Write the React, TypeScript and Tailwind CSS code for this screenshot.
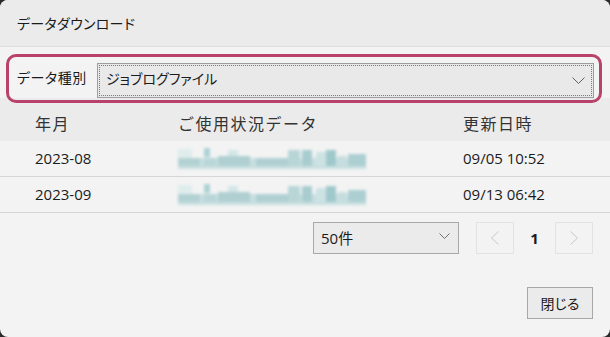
import React from "react";

const Blur = () => (
  <svg width="192" height="26" viewBox="0 0 192 26" className="block">
    <defs>
      <filter id="bl" x="-10%" y="-30%" width="120%" height="160%">
        <feGaussianBlur stdDeviation="1.4" />
      </filter>
    </defs>
    <g filter="url(#bl)">
      <rect x="2" y="12" width="188" height="11" fill="#c8dfe0" />
      <rect x="2" y="3" width="14" height="9" fill="#dfecec" />
      <rect x="2" y="12" width="22" height="8" fill="#b2d1d3" />
      <rect x="28" y="2" width="6" height="9" fill="#acd1d4" />
      <rect x="28" y="12" width="12" height="8" fill="#b8d6d8" />
      <rect x="42" y="10" width="32" height="10" fill="#afcfd1" />
      <rect x="52" y="4" width="10" height="6" fill="#d4e6e7" />
      <rect x="80" y="12" width="32" height="8" fill="#b0cfd2" />
      <rect x="112" y="4" width="12" height="16" fill="#b8d5d7" />
      <rect x="126" y="4" width="10" height="16" fill="#a8cccf" />
      <rect x="140" y="6" width="10" height="14" fill="#cce2e3" />
      <rect x="150" y="4" width="10" height="16" fill="#9fc8cb" />
      <rect x="162" y="10" width="8" height="10" fill="#c6dddf" />
      <rect x="172" y="8" width="18" height="12" fill="#accfd2" />
    </g>
  </svg>
);

const Chevron = ({ w, h, color }: { w: number; h: number; color: string }) => (
  <svg width={w} height={h} viewBox={`0 0 ${w} ${h}`} className="block">
    <path d={`M0.5 0.5 L${w / 2} ${h - 0.5} L${w - 0.5} 0.5`} fill="none" stroke={color} strokeWidth="1" />
  </svg>
);

export default function App() {
  const rows = [
    { ym: "2023-08", dt: "09/05 10:52" },
    { ym: "2023-09", dt: "09/13 06:42" },
  ];
  return (
    <div className="w-[610px] h-[337px] bg-[#2a2a2a] font-['Open_Sans','Noto_Sans_CJK_JP',sans-serif] text-[#1b1b1b]">
      <div className="relative w-[610px] h-[337px] bg-[#f3f3f3] rounded-[8px] overflow-hidden flex flex-col">
        <div className="h-[47px] shrink-0 bg-[#ebebeb] border-b border-[#dedede] flex items-center pl-[17px] text-[14px] font-['Noto_Sans_CJK_JP',sans-serif] [font-feature-settings:'palt'] tracking-[0.3px]">
          データダウンロード
        </div>
        <div className="flex items-center pt-[16px] pl-[17px] pr-[16px] h-[51px] shrink-0">
          <div className="w-[80px] text-[14px] font-['Noto_Sans_CJK_JP',sans-serif] [font-feature-settings:'palt'] tracking-[0.5px] -mt-[6px]">
            データ種別
          </div>
          <div className="flex-1 h-[35px] border border-[#9d9d9d] bg-[#e9e9e9] p-px">
            <div className="h-full border border-dotted border-[#7a7a7a] flex items-center justify-between pl-[6px] pr-[6px]">
              <span className="text-[14px] font-['Noto_Sans_CJK_JP',sans-serif] [font-feature-settings:'palt'] -mt-[5px]">ジョブログファイル</span>
              <Chevron w={13} h={7} color="#606060" />
            </div>
          </div>
        </div>
        <div className="shrink-0 h-[43px] bg-[#ebebeb] grid grid-cols-[143px_285px_1fr] pl-[35px] pt-[15px] text-[16px] leading-[20px] text-[#333] font-['Noto_Sans_CJK_JP',sans-serif] tracking-[1.5px]">
          <div>年月</div>
          <div>ご使用状況データ</div>
          <div>更新日時</div>
        </div>
        {rows.map((r) => (
          <div key={r.ym} className="shrink-0 h-[36px] border-b border-[#d6d6d6] grid grid-cols-[143px_285px_1fr] pl-[35px] items-center text-[15px]">
            <div>{r.ym}</div>
            <div className="pt-[1px] -ml-[2px]">
              <Blur />
            </div>
            <div>{r.dt}</div>
          </div>
        ))}
        <div className="flex items-center justify-end mt-[9px] pr-[17px] h-[32px] shrink-0">
          <div className="w-[146px] h-[32px] border border-[#a8a8a8] bg-[#ebebeb] flex items-center justify-between pl-[7px] pr-[8px] text-[15px]">
            <span>50件</span>
            <div className="-mt-[4px]">
              <Chevron w={11} h={6} color="#707070" />
            </div>
          </div>
          <div className="ml-[17px] w-[38px] h-[32px] border border-[#e2e2e2] flex items-center justify-center">
            <svg width="8" height="14" viewBox="0 0 8 14"><path d="M7.5 0.5 L0.5 7 L7.5 13.5" fill="none" stroke="#c8c8c8" strokeWidth="1" /></svg>
          </div>
          <div className="w-[41px] text-center text-[15px] font-bold">1</div>
          <div className="w-[38px] h-[32px] border border-[#e2e2e2] flex items-center justify-center">
            <svg width="8" height="14" viewBox="0 0 8 14"><path d="M0.5 0.5 L7.5 7 L0.5 13.5" fill="none" stroke="#c8c8c8" strokeWidth="1" /></svg>
          </div>
        </div>
        <div className="flex justify-end mt-[33px] pr-[17px]">
          <div className="w-[66px] h-[32px] border border-[#a8a8a8] bg-[#ebebeb] flex items-center justify-center text-[14px] font-['Noto_Sans_CJK_JP',sans-serif] [font-feature-settings:'palt']">
            閉じる
          </div>
        </div>
        <div className="absolute left-[6px] top-[54px] w-[596px] h-[49px] border-[3px] border-[#b8426c] rounded-[10px] pointer-events-none" />
      </div>
    </div>
  );
}
